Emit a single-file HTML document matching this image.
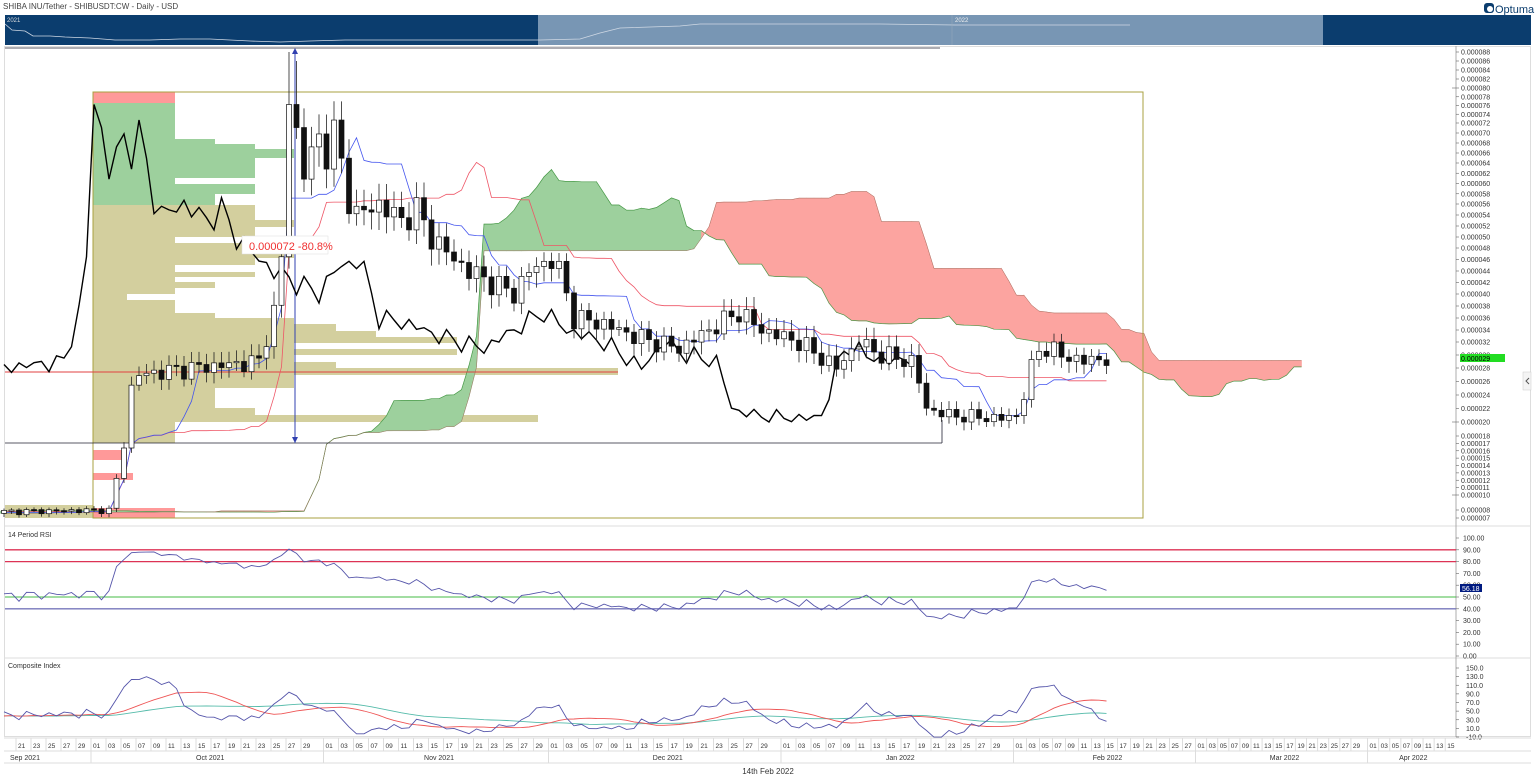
<!DOCTYPE html>
<html><head><meta charset="utf-8"><style>
html,body{margin:0;padding:0;background:#fff;width:1536px;height:783px;overflow:hidden;font-family:"Liberation Sans",sans-serif}
svg{position:absolute;left:0;top:0}
</style></head><body>
<svg id="s" width="1536" height="783" viewBox="0 0 1536 783" font-family="Liberation Sans, sans-serif">
<rect width="1536" height="783" fill="#fff"/>
<text x="3" y="9" font-size="8" fill="#444">SHIBA INU/Tether - SHIBUSDT:CW - Daily - USD</text>
<g>
<rect x="1484" y="3" width="10" height="10" rx="3" fill="#0b3d6e"/><circle cx="1490" cy="9" r="3" fill="#fff"/>
<text x="1495" y="13" font-size="11" fill="#0b3d6e">Optuma</text>
</g>
<rect x="5" y="15" width="533" height="30" fill="#0b3d6e"/>
<rect x="538" y="15" width="785" height="30" fill="#7896b4"/>
<rect x="1323" y="15" width="208" height="30" fill="#0b3d6e"/>
<text x="7" y="22" font-size="6" fill="#ddd">2021</text>
<text x="955" y="22" font-size="6" fill="#eee">2022</text>
<polyline fill="none" stroke="#cfd8e4" stroke-width="0.8" points="5,24 12,30 25,31 33,36 50,36 65,37 90,38 115,40 150,40 180,39 210,39 250,41 280,42 310,41 345,40 380,40 420,40 440,40 480,40 520,40 540,40 580,39 600,33 620,28 680,26 700,24 760,24 820,24 880,24 955,25 1020,25 1080,25 1130,25"/>
<line x1="952" y1="15" x2="952" y2="45" stroke="#9ab" stroke-width="0.5"/>
<rect x="4.5" y="46.5" width="1526" height="690" fill="none" stroke="#ddd"/>
<line x1="4" y1="526" x2="1531" y2="526" stroke="#ddd"/>
<line x1="4" y1="658" x2="1531" y2="658" stroke="#ddd"/>
<line x1="1456" y1="46" x2="1456" y2="737" stroke="#999" stroke-width="0.8"/>
<g id="main"></g>
<text x="8" y="537" font-size="7" fill="#333">14 Period RSI</text>
<text x="8" y="668" font-size="7" fill="#333">Composite Index</text>
<g id="ax" font-size="7" fill="#333"></g>
<rect x="1523" y="372" width="8" height="18" fill="#f4f4f4" stroke="#ccc" stroke-width="0.5"/>
<path d="M1529 378 l-3 3 l3 3" stroke="#555" fill="none" stroke-width="1"/>
<text x="768" y="774" font-size="8" fill="#333" text-anchor="middle">14th Feb 2022</text>
</svg>
<script>
var NS="http://www.w3.org/2000/svg";
function el(p,t,a,txt){var e=document.createElementNS(NS,t);for(var k in a)e.setAttribute(k,a[k]);if(txt!=null)e.textContent=txt;p.appendChild(e);return e;}
var M=document.getElementById('main'),AX=document.getElementById('ax');
var PT=[[5,530],[7,518],[8,510],[10,495],[18,436],[20,422],[24,395],[28,368],[32,342],[36,318],[40,294],[48,248],[56,204],[64,163],[72,123],[80,88],[88,52],[100,-10]];
function Y(p){for(var i=1;i<PT.length;i++){if(p<=PT[i][0]){var a=PT[i-1],b=PT[i];return a[1]+(p-a[0])/(b[0]-a[0])*(b[1]-a[1]);}}return -10;}
function X(d){return 4+d*7.5;}
function XA(d){if(d<=135)return X(d);if(d<=163)return X(135)+(d-135)*6.5;if(d<=194)return X(135)+28*6.5+(d-163)*5.55;return X(135)+28*6.5+31*5.55+(d-194)*5.55;}
var kf=[[-80,7],[-30,8],[0,7.8],[14,8],[15,12],[16,17],[17,25],[18,27],[25,28],[30,28.5],[34,29],[35,33],[36,37],[37,46],[38,78],[39,70],[40,62],[41,66],[42,69],[43,66],[44,70],[45,64],[46,57],[47,54],[50,56],[53,53],[55,55],[57,50],[60,46],[62,44],[65,42],[68,40],[70,44],[73,46],[74,44],[76,36],[80,35],[84,33],[90,31],[94,34],[98,37],[101,34],[106,32],[111,28],[114,32],[117,30],[121,29],[122,26],[123,22],[126,21],[133,20.5],[135,21],[136,24],[137,28],[138,31],[139,31],[141,30],[144,29],[146,29.5],[148,29]];
function I(d){for(var i=1;i<kf.length;i++){if(d<=kf[i][0]){var a=kf[i-1],b=kf[i];return a[1]+(d-a[0])/(b[0]-a[0])*(b[1]-a[1]);}}return 29;}
var D0=-80,D1=147,C={},O={},H={},L={};
for(var d=D0;d<=D1;d++){var v=I(d)*(1+0.035*Math.sin(d*2.3)+0.02*Math.cos(d*1.7));C[d]=v;O[d]=d==D0?v:C[d-1];var mx=Math.max(O[d],C[d]),mn=Math.min(O[d],C[d]);H[d]=mx*(1+0.03+0.03*Math.abs(Math.sin(d*3.1)));L[d]=mn*(1-0.03-0.03*Math.abs(Math.cos(d*2.7)));}
H[38]=88;H[39]=86;
function mid(d,n){var h=-1,l=1e9;for(var k=d-n+1;k<=d;k++){if(k<D0)continue;h=Math.max(h,H[k]);l=Math.min(l,L[k]);}return (h+l)/2;}
var TK={},KJ={},SA={},SB={};
for(var d=D0;d<=D1;d++){TK[d]=mid(d,9);KJ[d]=mid(d,26);SA[d+26]=(TK[d]+KJ[d])/2;SB[d+26]=mid(d,52);}
var vp=[[92,103,175,'#f99'],[103,139,175,'#9dd09d'],[139,144,215,'#9dd09d'],[144,178,255,'#9dd09d'],[149,158,294,'#9dd09d'],[178,184,175,'#9dd09d'],[184,194,255,'#9dd09d'],[194,205,215,'#9dd09d'],
[205,220,255,'#d3cf9e'],[220,227,294,'#d3cf9e'],[227,237,255,'#d3cf9e'],[237,243,175,'#d3cf9e'],[243,248,255,'#d3cf9e'],[248,258,294,'#d3cf9e'],[258,265,255,'#d3cf9e'],[265,272,175,'#d3cf9e'],[272,277,255,'#d3cf9e'],[277,282,175,'#d3cf9e'],[282,288,215,'#d3cf9e'],[288,294,175,'#d3cf9e'],[294,300,127,'#d3cf9e'],[300,313,175,'#d3cf9e'],[313,318,215,'#d3cf9e'],[318,324,294,'#d3cf9e'],[324,331,336,'#d3cf9e'],[331,337,376,'#d3cf9e'],[337,343,457,'#d3cf9e'],[343,349,294,'#d3cf9e'],[349,355,457,'#d3cf9e'],[355,362,294,'#d3cf9e'],[362,368,336,'#d3cf9e'],[368,375,618,'#d3cf9e'],[375,388,294,'#d3cf9e'],[388,408,215,'#d3cf9e'],[408,415,255,'#d3cf9e'],[415,422,538,'#d3cf9e'],[422,443,175,'#d3cf9e'],
[443,450,93,'#fff'],[450,460,127,'#f99'],[460,473,93,'#fff'],[473,480,133,'#f99'],[508,518,175,'#f99']];
vp.forEach(function(b){el(M,'rect',{x:93,y:b[0],width:b[2]-93,height:b[1]-b[0],fill:b[3]});});
el(M,'rect',{x:5,y:505,width:88,height:13,fill:'#d3cf9e'});
for(var d=D0+27;d<=D1+26;d++){if(SA[d]==null||SA[d-1]==null)continue;var a0=SA[d-1],a1=SA[d],b0=SB[d-1],b1=SB[d];var g=(a0+a1)>(b0+b1);
el(M,'polygon',{points:X(d-1)+','+Y(a0)+' '+X(d)+','+Y(a1)+' '+X(d)+','+Y(b1)+' '+X(d-1)+','+Y(b0),fill:g?'#9dd09d':'#fca4a0',stroke:g?'#9dd09d':'#fca4a0','stroke-width':0.6});}
function line(obj,s,e,sh,col,w){var p=[];for(var d=s;d<=e;d++){if(obj[d]==null)continue;p.push(X(d+sh).toFixed(1)+','+Y(obj[d]).toFixed(1));}el(M,'polyline',{points:p.join(' '),fill:'none',stroke:col,'stroke-width':w});}
line(SA,0,D1+26,0,'#4a9a4a',0.7);line(SB,0,D1+26,0,'#a07060',0.5);
el(M,'rect',{x:93,y:92,width:1050,height:426,fill:'none',stroke:'#a8a040','stroke-width':1});
el(M,'line',{x1:5,y1:372,x2:618,y2:372,stroke:'#e04040','stroke-width':1});
el(M,'line',{x1:5,y1:443,x2:942,y2:443,stroke:'#223','stroke-width':0.8});
el(M,'line',{x1:942,y1:443,x2:942,y2:420,stroke:'#223','stroke-width':0.8});
el(M,'line',{x1:5,y1:48,x2:940,y2:48,stroke:'#223','stroke-width':0.8});
el(M,'line',{x1:295,y1:50,x2:295,y2:443,stroke:'#3040b0','stroke-width':1});
el(M,'path',{d:'M292 54 L295 48 L298 54Z M292 437 L295 443 L298 437Z',fill:'#3040b0'});
line(KJ,0,D1,0,'#ee5566',0.8);line(TK,0,D1,0,'#4455ee',0.8);
line(C,26,D1,-26,'#000',1.4);
for(var d=0;d<=D1;d++){var x=X(d),o=O[d],c=C[d];var up=c>=o;var t=Y(Math.max(o,c)),b=Y(Math.min(o,c));if(b-t<1.2)b=t+1.2;
el(M,'line',{x1:x,y1:Y(H[d]),x2:x,y2:Y(L[d]),stroke:'#222','stroke-width':0.8});
el(M,'rect',{x:x-2.5,y:t,width:5,height:b-t,fill:up?'#fff':'#111',stroke:'#111','stroke-width':0.7});}
el(M,'rect',{x:242,y:236,width:86,height:18,fill:'#fff',stroke:'#ddd','stroke-width':0.5});
el(M,'text',{x:249,y:250,'font-size':11,fill:'#f03030'},'0.000072  -80.8%');
var lab=[];for(var p=88;p>=18;p-=2)lab.push(p);[17,16,15,14,13,12,11,10,8,7].forEach(function(p){lab.push(p)});
lab.forEach(function(p){var y=Y(p);el(AX,'line',{x1:p==80||p==20||p==10?1452:1456,y1:y,x2:1459,y2:y,stroke:'#666','stroke-width':0.6});el(AX,'text',{x:1461,y:y+2.5,'font-size':7},'0.0000'+(p<10?'0':'')+p);});
el(AX,'rect',{x:1460,y:354,width:45,height:8,fill:'#22dd22'});el(AX,'text',{x:1461,y:361,'font-size':7,fill:'#000'},'0.000029');
function ry(v){return 538+(100-v)*1.18;}
[100,90,80,70,60,50,40,30,20,10,0].forEach(function(v){el(AX,'line',{x1:1456,y1:ry(v),x2:1459,y2:ry(v),stroke:'#666','stroke-width':0.6});el(AX,'text',{x:1463,y:ry(v)+2.5},v.toFixed(2));});
el(M,'line',{x1:5,y1:ry(90),x2:1456,y2:ry(90),stroke:'#dd3355','stroke-width':1.3});
el(M,'line',{x1:5,y1:ry(80),x2:1456,y2:ry(80),stroke:'#dd3355','stroke-width':1.3});
el(M,'line',{x1:5,y1:ry(50),x2:1456,y2:ry(50),stroke:'#44bb44','stroke-width':1});
el(M,'line',{x1:5,y1:ry(40),x2:1456,y2:ry(40),stroke:'#7777bb','stroke-width':1.3});
var R={},ag=0,al=0,n=14;
for(var d=D0+1;d<=D1;d++){var ch=C[d]-C[d-1],g=Math.max(ch,0)/C[d-1]*100,l=Math.max(-ch,0)/C[d-1]*100;ag=(ag*(n-1)+g)/n;al=(al*(n-1)+l)/n;R[d]=al==0?100:100-100/(1+ag/al);}
var p=[];for(var d=0;d<=D1;d++)p.push(X(d).toFixed(1)+','+ry(R[d]).toFixed(1));
el(M,'polyline',{points:p.join(' '),fill:'none',stroke:'#5555aa','stroke-width':0.9});
el(AX,'rect',{x:1460,y:584,width:22,height:8,fill:'#001a80'});el(AX,'text',{x:1462,y:591,fill:'#fff'},'56.18');
function cy(v){return 668+(150-v)*69/160;}
[150,130,110,90,70,50,30,10,-10].forEach(function(v){el(AX,'text',{x:1466,y:cy(v)+2.5},v.toFixed(1));el(AX,'line',{x1:1456,y1:cy(v),x2:1459,y2:cy(v),stroke:'#666','stroke-width':0.6});});
var R3={},a3=0,b3=0;for(var d=D0+1;d<=D1;d++){var ch=C[d]-C[d-1],g=Math.max(ch,0),l=Math.max(-ch,0);a3=(a3*2+g)/3;b3=(b3*2+l)/3;R3[d]=b3==0?100:100-100/(1+a3/b3);}
var CI={};for(var d=D0+15;d<=D1;d++){var s=(R3[d]+R3[d-1]+R3[d-2])/3;CI[d]=(R[d]-R[d-9])*1.3+s*0.8;}
function sma(o,k){var r={};for(var d=D0+15+k;d<=D1;d++){var t=0;for(var j=0;j<k;j++)t+=o[d-j];r[d]=t/k;}return r;}
var S1=sma(CI,13),S2=sma(CI,33);
function pl(o,col){var p=[];for(var d=0;d<=D1;d++){var v=Math.max(-15,Math.min(155,o[d]));p.push(X(d).toFixed(1)+','+cy(v).toFixed(1));}el(M,'polyline',{points:p.join(' '),fill:'none',stroke:col,'stroke-width':0.9});}
pl(S2,'#55bbaa');pl(S1,'#ee5555');pl(CI,'#5555aa');
el(AX,'line',{x1:4,y1:738,x2:1531,y2:738,stroke:'#ddd'});el(AX,'line',{x1:4,y1:751,x2:1531,y2:751,stroke:'#ddd'});el(AX,'line',{x1:4,y1:763,x2:1531,y2:763,stroke:'#ddd'});
var months=[['Sep 2021',-18,30],['Oct 2021',12,31],['Nov 2021',43,30],['Dec 2021',73,31],['Jan 2022',104,31],['Feb 2022',135,28],['Mar 2022',163,31],['Apr 2022',194,30]];
months.forEach(function(m,i){var x0=XA(m[1]);if(i>0)el(AX,'line',{x1:x0-3,y1:751,x2:x0-3,y2:763,stroke:'#ddd'});
var lx=i==0?10:(XA(m[1])+Math.min(XA(m[1]+m[2]),1456))/2;el(AX,'text',{x:lx,y:760,'text-anchor':i==0?'start':'middle'},m[0]);
var step=i>=5?1:1;
for(var dd=1;dd<=m[2];dd++){var d=m[1]+dd-1;var x=XA(d);if(x<10||x>1452)continue;if(dd%2==1&&dd<30){if(i==0&&dd<21)continue;el(AX,'line',{x1:x-3,y1:738,x2:x-3,y2:751,stroke:'#ddd'});el(AX,'text',{x:x-1,y:748,'font-size':6.5},(dd<10?'0':'')+dd);}}});
</script>
</body></html>
